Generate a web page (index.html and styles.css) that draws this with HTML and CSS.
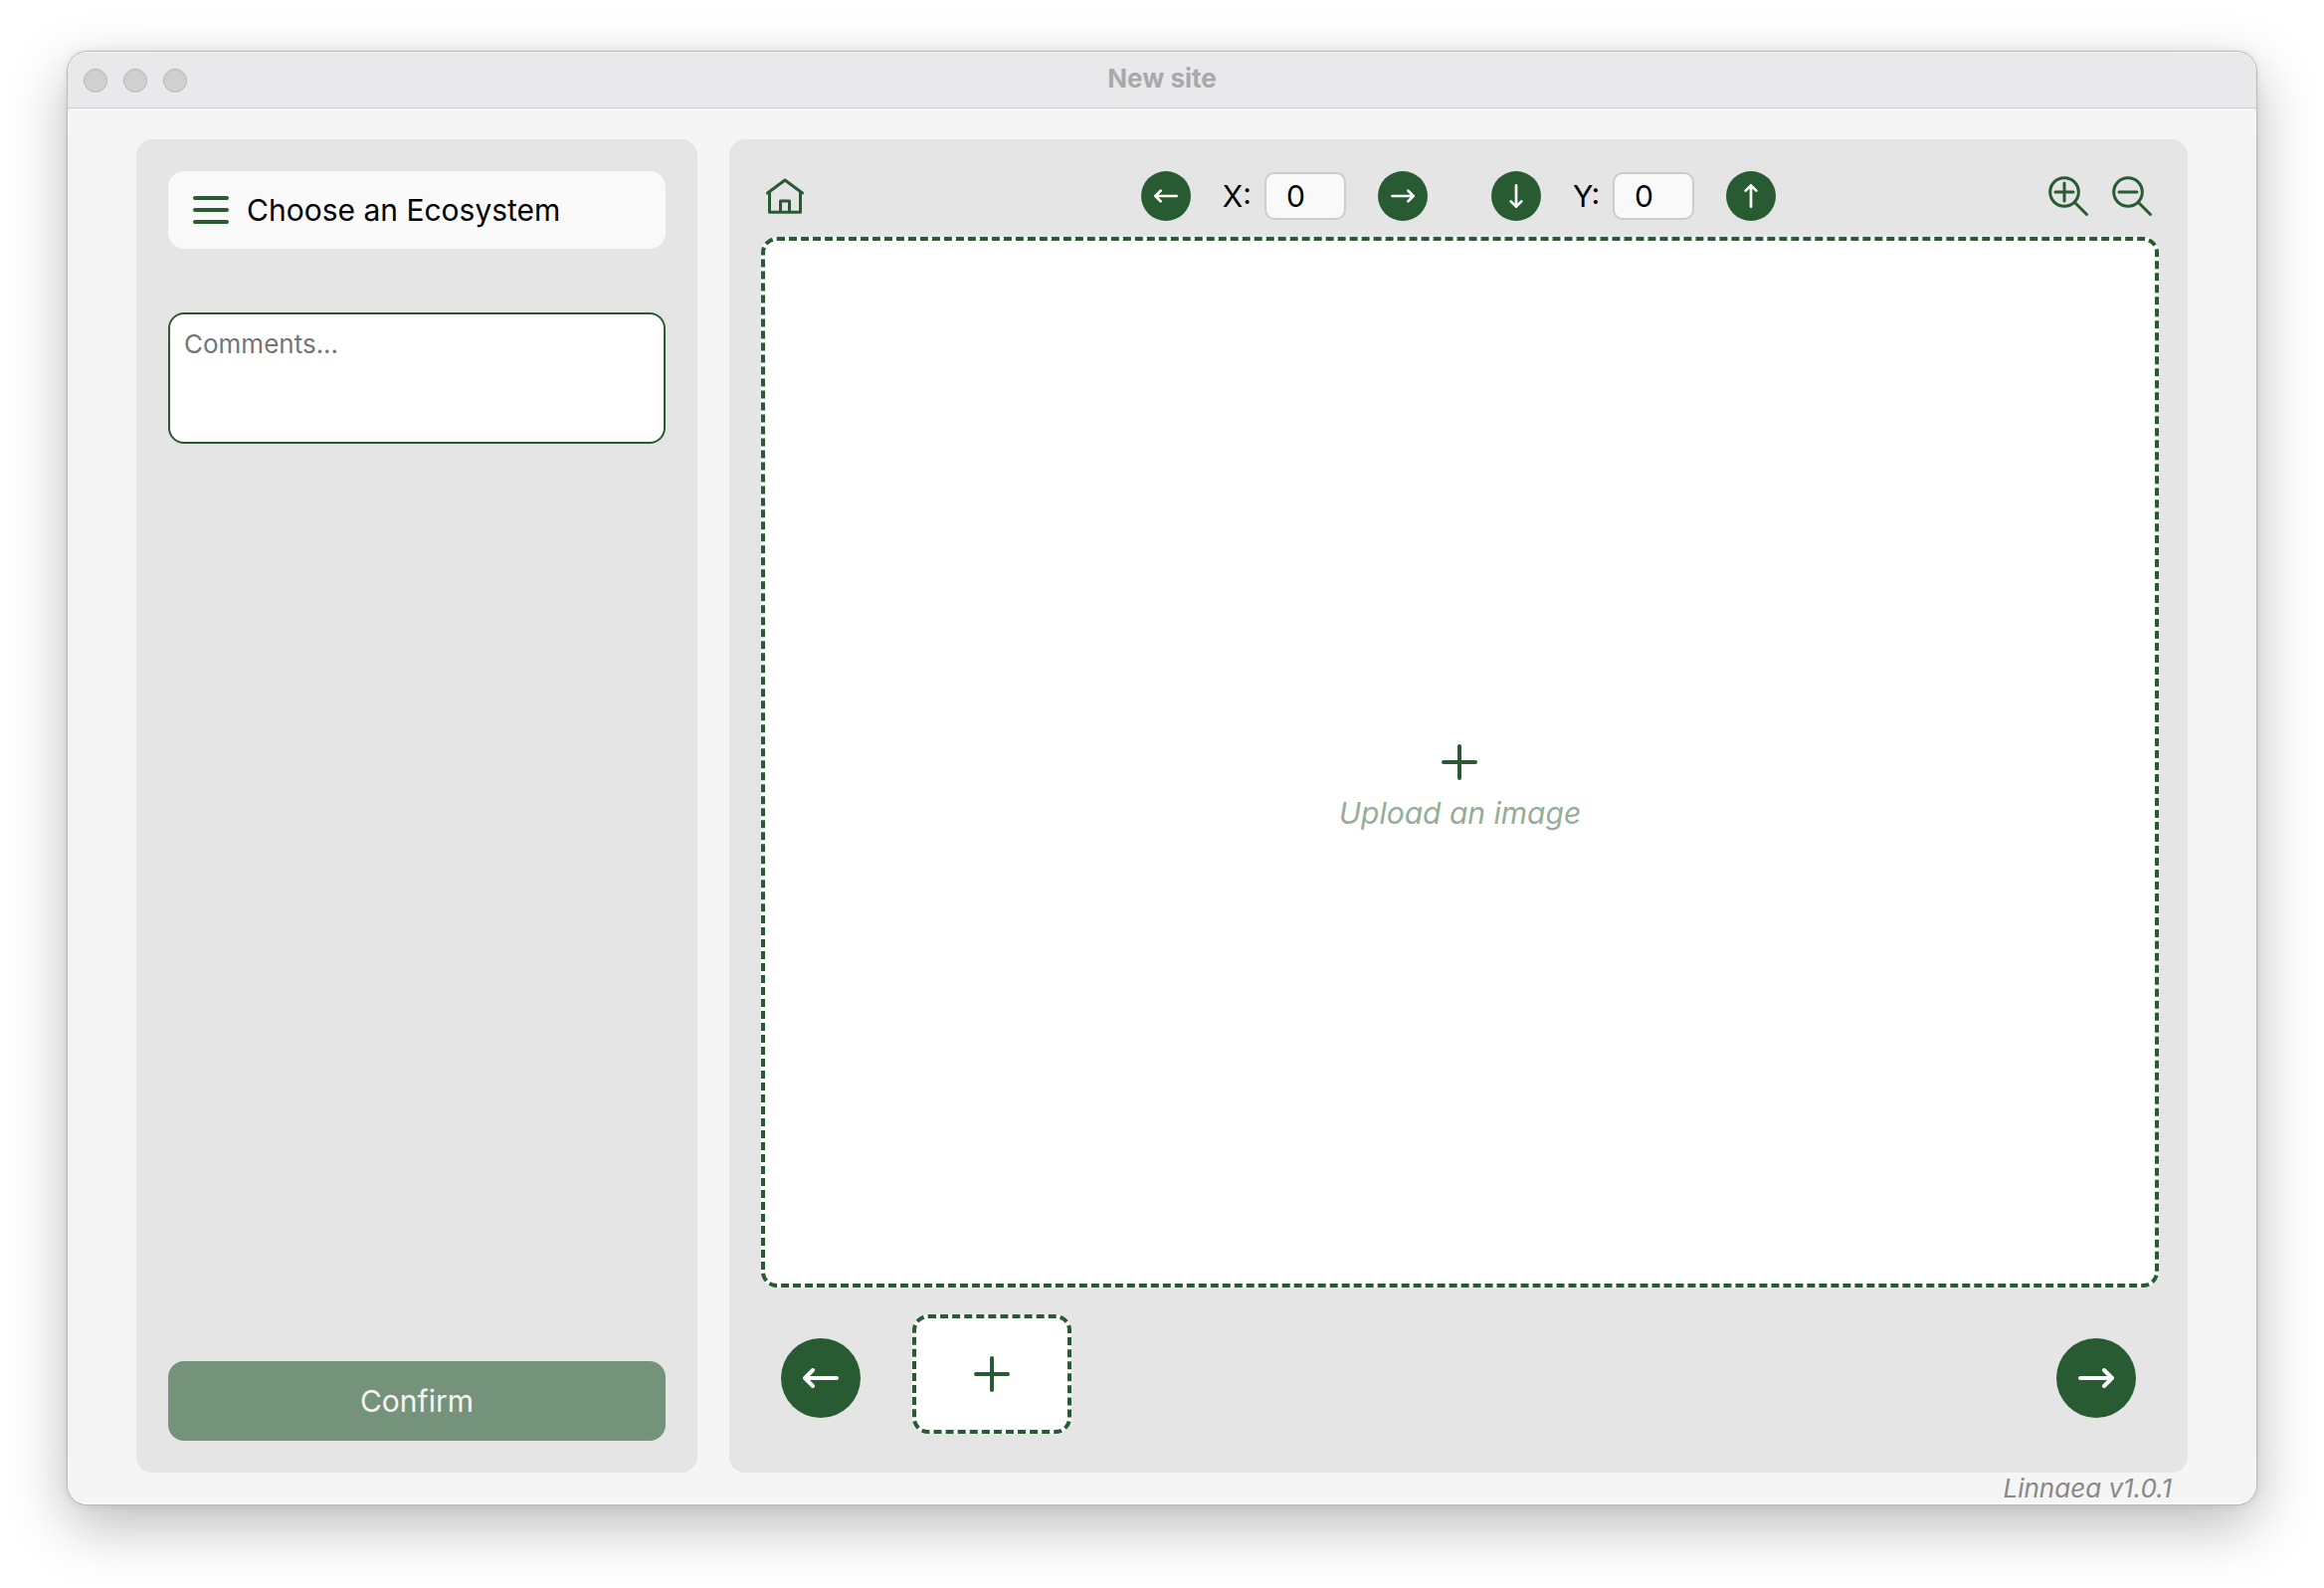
FILE: index.html
```html
<!DOCTYPE html>
<html lang="en">
<head>
<meta charset="utf-8">
<meta name="viewport" content="width=device-width, initial-scale=1">
<title>New site</title>
<link rel="stylesheet" href="styles.css">
</head>
<body>
<div class="window">
  <header class="titlebar">
    <div class="lights">
      <span class="light"></span>
      <span class="light"></span>
      <span class="light"></span>
    </div>
    <h1 class="window-title">New site</h1>
  </header>

  <div class="content">
    <div class="columns">
      <aside class="panel sidebar">
        <button type="button" class="ecosystem">
          <svg class="menu-icon" viewBox="0 0 36 36" aria-hidden="true"><path d="M2 6H34M2 18H34M2 30H34"/></svg>
          <span>Choose an Ecosystem</span>
        </button>
        <textarea class="comments" aria-label="Comments" placeholder="Comments..."></textarea>
        <button type="button" class="confirm">Confirm</button>
      </aside>

      <main class="panel viewer">
        <div class="toolbar">
          <div class="tools">
            <button type="button" class="tool" aria-label="Home">
              <svg viewBox="0 0 48 48" aria-hidden="true"><path d="M6.500 21L24 8L41.500 21M8.500 19.500V40.200H39.500V19.500M19.500 40V29H28.500V40"/></svg>
            </button>
          </div>
          <div class="axes">
            <div class="axis">
              <button type="button" class="round" aria-label="Move left">
                <svg viewBox="0 0 36 36" aria-hidden="true"><path d="M34 18H2M10 10L2 18L10 26"/></svg>
              </button>
              <div class="field">
                <label for="x">X:</label>
                <input id="x" type="text" inputmode="numeric" value="0">
              </div>
              <button type="button" class="round" aria-label="Move right">
                <svg viewBox="0 0 36 36" aria-hidden="true"><path d="M2 18H34M26 10L34 18L26 26"/></svg>
              </button>
            </div>
            <div class="axis">
              <button type="button" class="round" aria-label="Move down">
                <svg viewBox="0 0 36 36" aria-hidden="true"><path d="M18 2V34M10 26L18 34L26 26"/></svg>
              </button>
              <div class="field">
                <label for="y">Y:</label>
                <input id="y" type="text" inputmode="numeric" value="0">
              </div>
              <button type="button" class="round" aria-label="Move up">
                <svg viewBox="0 0 36 36" aria-hidden="true"><path d="M18 34V2M10 10L18 2L26 10"/></svg>
              </button>
            </div>
          </div>
          <div class="tools tools-end">
            <button type="button" class="tool" aria-label="Zoom in">
              <svg viewBox="0 0 48 48" aria-hidden="true"><circle cx="20" cy="20" r="14.300"/><path d="M30.500 30.500L42.500 42.500M11 20H29M20 11V29"/></svg>
            </button>
            <button type="button" class="tool" aria-label="Zoom out">
              <svg viewBox="0 0 48 48" aria-hidden="true"><circle cx="20" cy="20" r="14.300"/><path d="M30.500 30.500L42.500 42.500M11 20H29"/></svg>
            </button>
          </div>
        </div>

        <button type="button" class="dropzone">
          <svg class="plus" viewBox="0 0 36 36" aria-hidden="true"><path d="M2 18H34M18 2V34"/></svg>
          <span class="dropzone-text">Upload an image</span>
        </button>

        <div class="strip">
          <button type="button" class="round round-large" aria-label="Previous image">
            <svg viewBox="0 0 36 36" aria-hidden="true"><path d="M34 18H2M10 10L2 18L10 26"/></svg>
          </button>
          <div class="thumbs">
            <button type="button" class="thumb" aria-label="Add an image">
              <svg class="plus" viewBox="0 0 36 36" aria-hidden="true"><path d="M2 18H34M18 2V34"/></svg>
            </button>
          </div>
          <button type="button" class="round round-large" aria-label="Next image">
            <svg viewBox="0 0 36 36" aria-hidden="true"><path d="M2 18H34M26 10L34 18L26 26"/></svg>
          </button>
        </div>
      </main>
    </div>
    <footer class="version">Linnaea v1.0.1</footer>
  </div>
</div>
</body>
</html>
```

FILE: styles.css
```css
:root {
  --green: #285b32;
  --panel: #e5e5e5;
  --field: #f9f9f9;
  --radius: 16px;
}

* {
  box-sizing: border-box;
}

body {
  display: flex;
  min-height: 100vh;
  margin: 0;
  padding: 52px 68px 84px;
  background: #fff;
  color: #000;
  font-family: Inter, "Liberation Sans", sans-serif;
  font-size: 30px;
  line-height: 36px;
}

button,
input,
textarea {
  margin: 0;
  padding: 0;
  border: 0;
  color: inherit;
  font: inherit;
}

button {
  cursor: pointer;
}

svg {
  display: block;
  fill: none;
  stroke: var(--green);
  stroke-width: 4px;
  stroke-linecap: round;
  stroke-linejoin: round;
}

.window {
  display: flex;
  flex: 1;
  flex-direction: column;
  overflow: hidden;
  border-radius: 20px;
  background: #fff;
  box-shadow: 0 0 0 1px #b8b8b9, 0 0 8px rgba(0, 0, 0, 0.1), 0 20px 60px rgba(0, 0, 0, 0.28);
}

.titlebar {
  display: grid;
  grid-template-columns: 1fr auto 1fr;
  align-items: center;
  height: 57px;
  padding: 0 16px;
  border-top: 1px solid #f6f6f6;
  border-bottom: 1px solid #cfcfd1;
  background: #e9e9eb;
}

.lights {
  display: flex;
  gap: 16px;
}

.light {
  width: 24px;
  height: 24px;
  border: 1px solid #b6b6b7;
  border-radius: 50%;
  background: #d0d0d1;
}

.window-title {
  margin: 0;
  padding-bottom: 4px;
  color: #a9a9ab;
  font-size: 26px;
  font-weight: 700;
  line-height: 32px;
}

.content {
  display: flex;
  flex: 1;
  flex-direction: column;
  margin-bottom: 2px;
  padding: 31px 69px 0;
  background: #f5f5f5;
}

.columns {
  display: grid;
  flex: 1;
  grid-template-columns: 5fr 13fr;
  gap: 32px;
}

.panel {
  display: flex;
  flex-direction: column;
  min-width: 0;
  border-radius: var(--radius);
  background: var(--panel);
}

.sidebar {
  padding: 32px;
}

.ecosystem {
  display: flex;
  align-items: center;
  gap: 18px;
  height: 78px;
  padding: 0 25px;
  border-radius: var(--radius);
  background: var(--field);
}

.menu-icon,
.plus {
  width: 36px;
  height: 36px;
}

.comments {
  height: 132px;
  margin-top: 64px;
  padding: 14px;
  border: 2px solid var(--green);
  border-radius: var(--radius);
  background: #fff;
  font-size: 26px;
  line-height: 32px;
  resize: none;
}

.comments::placeholder {
  color: #757575;
}

.confirm {
  height: 80px;
  margin-top: auto;
  border-radius: var(--radius);
  background: #75937a;
  color: #f5f5f5;
}

.viewer {
  padding: 32px 29px 31px 32px;
}

.toolbar {
  display: grid;
  grid-template-columns: 1fr auto 1fr;
  align-items: center;
  margin-right: 3px;
}

.tools {
  display: flex;
  gap: 16px;
}

.tools-end {
  justify-content: flex-end;
}

.tool {
  width: 48px;
  height: 48px;
  background: none;
}

.tool svg {
  width: 48px;
  height: 48px;
  stroke-width: 3px;
}

.axes {
  display: flex;
  gap: 64px;
}

.axis {
  display: flex;
  align-items: center;
  gap: 32px;
}

.field {
  display: flex;
  align-items: center;
  gap: 13px;
}

.field input {
  width: 82px;
  height: 48px;
  padding: 0 20px;
  border: 2px solid #ccc;
  border-radius: 10px;
  background: var(--field);
}

.round {
  display: grid;
  place-items: center;
  width: 50px;
  height: 50px;
  border-radius: 50%;
  background: var(--green);
}

.round svg {
  width: 24px;
  height: 24px;
  stroke: #fff;
}

.round-large {
  width: 80px;
  height: 80px;
}

.round-large svg {
  width: 36px;
  height: 36px;
}

.dropzone,
.thumb {
  border: 4px dashed var(--green);
  border-radius: var(--radius);
  background: #fff;
}

.dropzone {
  display: grid;
  flex: 1;
  grid-template-rows: 1fr auto 1fr;
  justify-items: center;
  margin-top: 16px;
}

.dropzone .plus {
  grid-row: 2;
}

.dropzone-text {
  grid-row: 3;
  padding-top: 15px;
  color: #94ad98;
  font-style: italic;
}

.strip {
  display: flex;
  align-items: center;
  gap: 52px;
  height: 128px;
  margin-top: 27px;
  padding: 0 23px 0 20px;
}

.thumbs {
  display: flex;
  flex: 1;
  align-self: flex-start;
}

.thumb {
  display: grid;
  place-items: center;
  width: 160px;
  height: 120px;
}

.version {
  height: 30px;
  padding-right: 16px;
  color: #888;
  font-size: 26px;
  font-style: italic;
  line-height: 32px;
  text-align: right;
}
```
